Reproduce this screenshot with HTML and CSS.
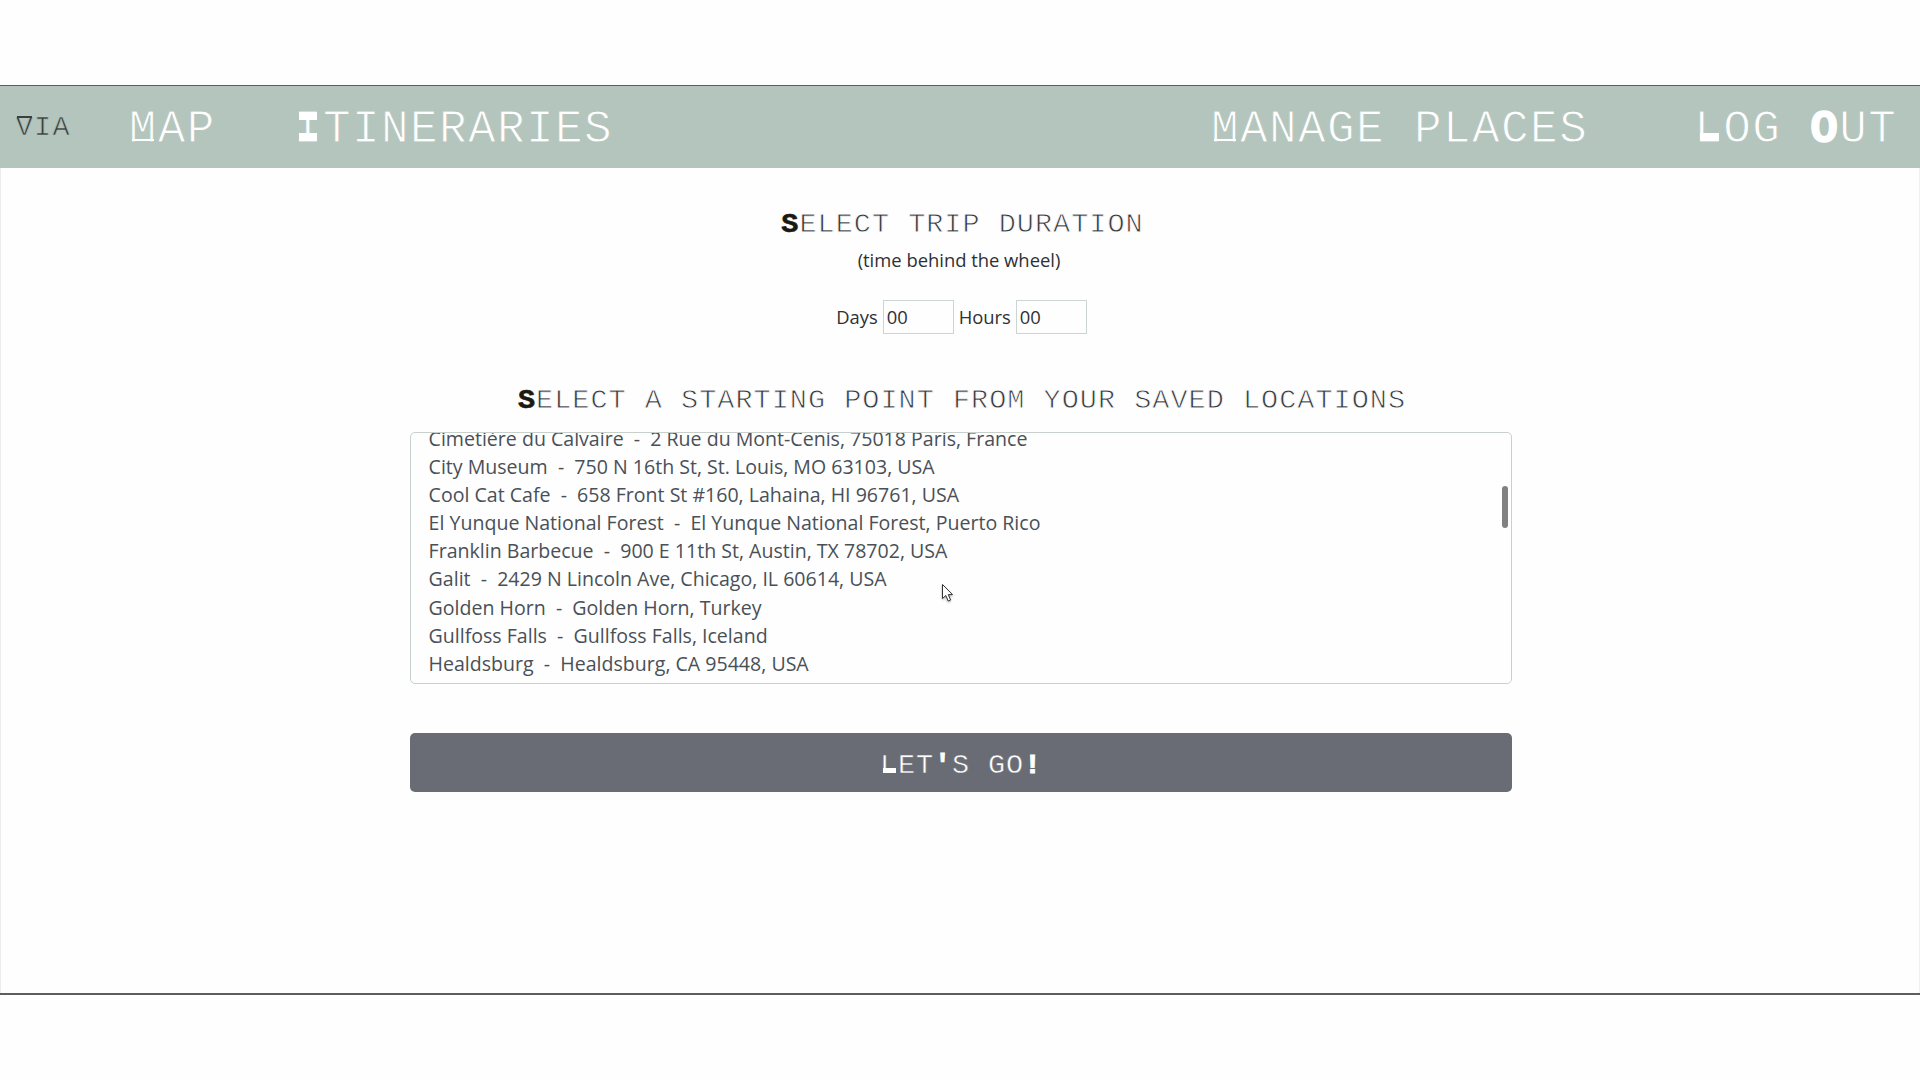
FILE: index.html
```html
<!DOCTYPE html>
<html lang="en">
<head>
<meta charset="utf-8">
<title>VIA</title>
<link rel="stylesheet" href="styles.css">
</head>
<body>
<div class="window">
  <nav class="navbar">
    <a class="brand display"><span class="cap-v">V</span>IA</a>
    <a class="nav-map display"><span class="cap-m">M</span>AP</a>
    <a class="nav-trips display"><span class="cap-i">I</span>TINERARIES</a>
    <a class="nav-manage display"><span class="cap-m">M</span>ANAGE PLACES</a>
    <a class="nav-logout display"><span class="cap-l">L</span>OG <span class="heavy">O</span>UT</a>
  </nav>
  <main class="content">
    <h1 class="heading display"><span class="heavy">S</span>ELECT TRIP DURATION</h1>
    <p class="hint">(time behind the wheel)</p>
    <div class="duration">
      <label>Days</label><div class="field">00</div>
      <label>Hours</label><div class="field">00</div>
    </div>
    <h2 class="heading second display"><span class="heavy">S</span>ELECT A STARTING POINT FROM YOUR SAVED LOCATIONS</h2>
    <div class="places">
      <ul class="options">
        <li>Cimetière du Calvaire&nbsp; -&nbsp; 2 Rue du Mont-Cenis, 75018 Paris, France</li>
        <li>City Museum&nbsp; -&nbsp; 750 N 16th St, St. Louis, MO 63103, USA</li>
        <li>Cool Cat Cafe&nbsp; -&nbsp; 658 Front St #160, Lahaina, HI 96761, USA</li>
        <li>El Yunque National Forest&nbsp; -&nbsp; El Yunque National Forest, Puerto Rico</li>
        <li>Franklin Barbecue&nbsp; -&nbsp; 900 E 11th St, Austin, TX 78702, USA</li>
        <li>Galit&nbsp; -&nbsp; 2429 N Lincoln Ave, Chicago, IL 60614, USA</li>
        <li>Golden Horn&nbsp; -&nbsp; Golden Horn, Turkey</li>
        <li>Gullfoss Falls&nbsp; -&nbsp; Gullfoss Falls, Iceland</li>
        <li>Healdsburg&nbsp; -&nbsp; Healdsburg, CA 95448, USA</li>
      </ul>
      <div class="thumb"></div>
    </div>
    <button class="go display"><span class="cap-l">L</span>ET<span class="heavy">'</span>S GO<span class="heavy">!</span></button>
  </main>
  <svg class="cursor" width="16" height="22" viewBox="0 0 16 22"><path d="M1.5 1.5V15.5L4.8 12.5L7.2 18L9.6 17L7.3 11.6H11.5Z" fill="#fff" stroke="#333" stroke-width="1"/></svg>
</div>
</body>
</html>
```
FILE: styles.css
```css
* { box-sizing: border-box; }
body {
  margin: 0;
  height: 1080px;
  padding-top: 85px;
  overflow: hidden;
  background: #fefefe;
  color: #2d3034;
  font: 18.4px/1.5 "Open Sans", sans-serif;
}
.window {
  position: relative;
  height: 910px;
  border-top: 1px solid #5b605d;
  border-bottom: 2px solid #5b5e5b;
  box-shadow: inset 1px 0 #e9eeec, inset -1px 0 #eef1f0;
}
.display {
  font-family: "Liberation Mono", monospace;
  font-weight: 400;
  white-space: pre;
}
.navbar {
  display: flex;
  align-items: center;
  height: 82px;
  padding: 5px 22.8px 0 15.7px;
  background: #b3c5bc;
  color: #fff;
  font-size: 46px;
  line-height: 50px;
  letter-spacing: 1.4px;
  -webkit-text-stroke: 1px #b3c5bc;
}
.brand {
  width: 113px;
  margin-top: -3px;
  color: #3b3f40;
  font-size: 28.5px;
  letter-spacing: 1.3px;
  -webkit-text-stroke-width: .7px;
}
.nav-map { width: 165.3px; }
.nav-manage { margin-left: auto; margin-right: 106px; }
.cap-m, .cap-v, .cap-i, .cap-l { position: relative; }
.cap-m::after, .cap-v::after, .cap-i::before, .cap-i::after, .cap-l::after {
  content: "";
  position: absolute;
  background: currentColor;
}
.cap-m::after { left: 3px; width: 22px; height: 2px; bottom: .31em; }
.cap-v::after { left: 1px; width: 15px; height: 1.5px; top: .18em; }
.cap-i::before { left: 5px; width: 18px; height: 8px; top: .19em; }
.cap-i::after { left: 5px; width: 18px; height: 8px; bottom: .31em; }
.cap-l::after { left: .12em; width: .43em; height: .17em; bottom: .31em; }
.heavy {
  font-weight: 700;
  -webkit-text-stroke: .03em currentColor;
}
.content { width: 1102px; margin: 0 auto; position: relative; left: 1px; }
.heading {
  margin: 0;
  padding: 40px 0 0 3px;
  color: #34393e;
  font-size: 28.5px;
  line-height: 34px;
  letter-spacing: 1.02px;
  text-align: center;
  -webkit-text-stroke: .8px #fefefe;
}
.heading .heavy { color: #1b1a10; -webkit-text-stroke: .6px #1b1a10; }
.hint { margin: 4px 0 0; text-align: center; line-height: 28px; position: relative; left: -2px; }
.duration {
  display: flex;
  justify-content: center;
  align-items: center;
  margin-top: 26px;
  padding-left: 6px;
  height: 34px;
}
.field {
  width: 71px;
  height: 34px;
  margin: 0 5px;
  padding-left: 3px;
  border: 1px solid #ccd5d1;
  line-height: 32px;
}
.second { padding: 50px 0 0 2px; }
.places {
  position: relative;
  height: 252px;
  margin-top: 14px;
  overflow: hidden;
  border: 1px solid #c8d0cc;
  border-radius: 5px;
}
.options {
  margin: -8.4px 0 0;
  padding: 0 0 0 17.6px;
  list-style: none;
  color: #495057;
  font-size: 19.57px;
  line-height: 28.17px;
}
.thumb {
  position: absolute;
  top: 53px;
  right: 3px;
  width: 6px;
  height: 42px;
  border-radius: 3px;
  background: #7f8183;
}
.go {
  display: block;
  width: 100%;
  height: 59px;
  margin-top: 49px;
  padding: 6px 0 0;
  border: 0;
  border-radius: 5px;
  background: #696c74;
  color: #fff;
  font-size: 28.5px;
  line-height: 34px;
  letter-spacing: .9px;
  -webkit-text-stroke: .5px #696c74;
}
.cursor { position: absolute; left: 941px; top: 497px; filter: drop-shadow(0 1px 1px #0005); }
```
